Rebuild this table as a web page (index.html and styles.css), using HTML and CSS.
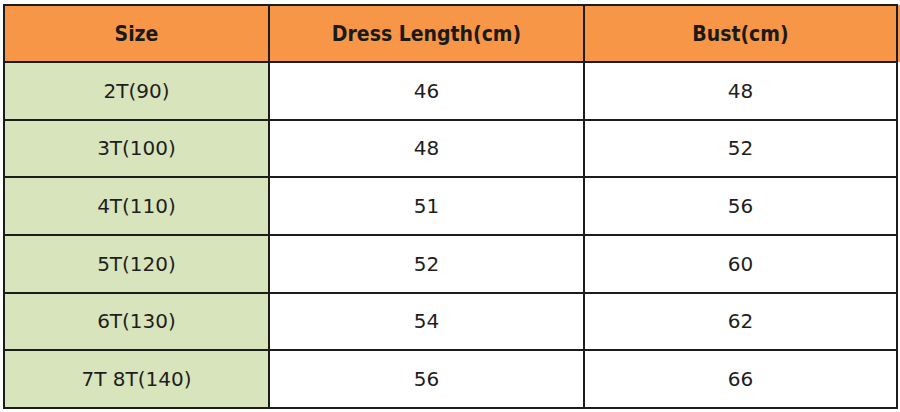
FILE: index.html
```html
<!DOCTYPE html>
<html>
<head>
<meta charset="utf-8">
<link rel="stylesheet" href="styles.css">
</head>
<body>
<table class="size-table">
  <colgroup>
    <col class="c-size">
    <col class="c-len">
    <col class="c-bust">
    <col class="c-extra">
  </colgroup>
  <thead>
    <tr class="head-row">
      <th>Size</th>
      <th>Dress Length(cm)</th>
      <th>Bust(cm)</th>
      <th class="extra"></th>
    </tr>
  </thead>
  <tbody>
    <tr><td class="size">2T(90)</td><td>46</td><td>48</td><td class="extra"></td></tr>
    <tr><td class="size">3T(100)</td><td>48</td><td>52</td><td class="extra"></td></tr>
    <tr><td class="size">4T(110)</td><td>51</td><td>56</td><td class="extra"></td></tr>
    <tr><td class="size">5T(120)</td><td>52</td><td>60</td><td class="extra"></td></tr>
    <tr><td class="size">6T(130)</td><td>54</td><td>62</td><td class="extra"></td></tr>
    <tr><td class="size">7T 8T(140)</td><td>56</td><td>66</td><td class="extra"></td></tr>
  </tbody>
</table>
</body>
</html>
```
FILE: styles.css
```css
html, body {
  margin: 0;
  padding: 0;
  background: #ffffff;
}
body {
  padding: 4px 0 0 3px;
  overflow: hidden;
  width: 900px;
  height: 412px;
  box-sizing: border-box;
}
.size-table {
  border-collapse: collapse;
  table-layout: fixed;
  width: 900px;
  font-family: "DejaVu Sans", Verdana, sans-serif;
  color: #1e1e1e;
}
.c-size { width: 265px; }
.c-len { width: 315px; }
.c-bust { width: 313px; }
.c-extra { width: 7px; }
.size-table th,
.size-table td {
  border: 2px solid #1c1c1c;
  padding: 0;
  text-align: center;
  vertical-align: middle;
}
.head-row th {
  background: #f79646;
  height: 55px;
  font-family: "DejaVu Sans Condensed", "DejaVu Sans", sans-serif;
  font-weight: bold;
  font-size: 21px;
  color: #1a1a1a;
}
.size-table td {
  height: 55.67px;
  font-size: 20px;
  background: #ffffff;
}
.size-table td.size {
  background: #d8e4bc;
}
.size-table .extra {
  border-right: none;
  border-top: none;
  border-bottom: none;
}
.size-table td.extra {
  background: #ffffff;
}
```
